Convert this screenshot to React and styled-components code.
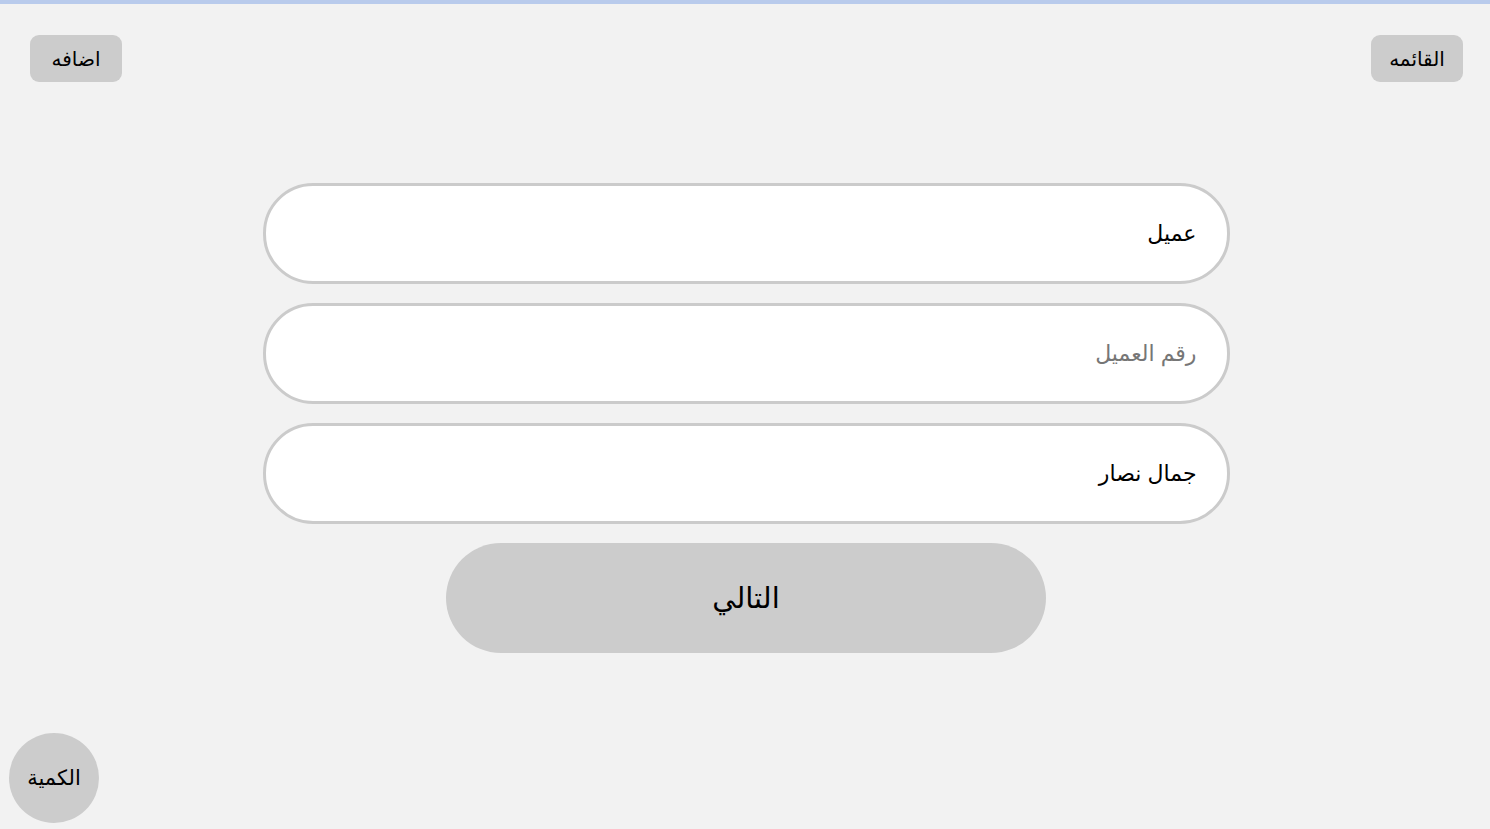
import React from 'react';
import styled, { createGlobalStyle } from 'styled-components';

const GlobalStyle = createGlobalStyle`
  html, body {
    margin: 0;
    padding: 0;
    background: #f2f2f2;
    font-family: "Liberation Sans", "DejaVu Sans", Arial, sans-serif;
  }
`;

const Page = styled.div`
  min-height: 829px;
  border-top: 4px solid #b9cbec;
  padding-left: 2px;
  box-sizing: border-box;
  position: relative;
`;

const Header = styled.header`
  display: flex;
  justify-content: space-between;
  align-items: center;
  padding: 31px 27px 0 28px;
`;

const SmallButton = styled.button`
  width: 92px;
  height: 47px;
  border: none;
  border-radius: 9px;
  background: #cccccc;
  color: #000;
  font-family: inherit;
  font-size: 20px;
  cursor: pointer;
`;

const Form = styled.form`
  width: 967px;
  margin: 101px auto 0;
  display: flex;
  flex-direction: column;
  align-items: center;
  gap: 19px;
`;

const Field = styled.input`
  width: 100%;
  height: 101px;
  box-sizing: border-box;
  border: 3px solid #cbcbcb;
  border-radius: 50px;
  background: #fff;
  padding: 0 30px;
  text-align: right;
  font-family: inherit;
  font-size: 22px;
  color: #000;
  outline: none;

  &::placeholder {
    color: #767676;
  }
`;

const NextButton = styled.button`
  width: 600px;
  height: 110px;
  border: none;
  border-radius: 55px;
  background: #cccccc;
  font-family: inherit;
  font-size: 29px;
  color: #000;
  cursor: pointer;
`;

const QtyButton = styled.button`
  position: absolute;
  left: 9px;
  bottom: 6px;
  width: 90px;
  height: 90px;
  border: none;
  border-radius: 50%;
  background: #cccccc;
  font-family: inherit;
  font-size: 21px;
  color: #000;
  cursor: pointer;
`;

const App = () => (
  <>
    <GlobalStyle />
    <Page dir="rtl">
      <Header>
        <SmallButton type="button">القائمه</SmallButton>
        <SmallButton type="button">اضافه</SmallButton>
      </Header>
      <Form onSubmit={(e) => e.preventDefault()}>
        <Field type="text" defaultValue="عميل" />
        <Field type="text" placeholder="رقم العميل" />
        <Field type="text" defaultValue="جمال نصار" />
        <NextButton type="submit">التالي</NextButton>
      </Form>
      <QtyButton type="button">الكمية</QtyButton>
    </Page>
  </>
);

export default App;
